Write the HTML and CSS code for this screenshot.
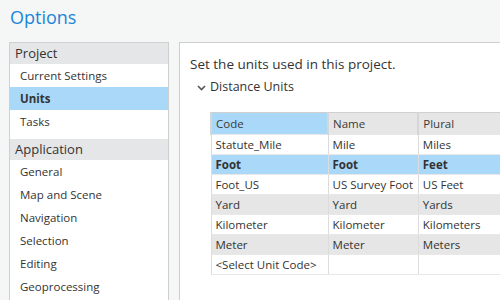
FILE: index.html
```html
<!DOCTYPE html>
<html lang="en">
<head>
    <meta charset="UTF-8">
    <title>Options</title>
    <link rel="stylesheet" href="styles.css">
</head>
<body>
    <div class="window">
        <h1 class="title">Options</h1>

        <div class="layout">
            <!-- Navigation -->
            <div class="nav">
                <div class="nav-group">Project</div>
                <div class="nav-item">Current Settings</div>
                <div class="nav-item selected">Units</div>
                <div class="nav-item">Tasks</div>

                <div class="nav-group spaced">Application</div>
                <div class="nav-item">General</div>
                <div class="nav-item">Map and Scene</div>
                <div class="nav-item">Navigation</div>
                <div class="nav-item">Selection</div>
                <div class="nav-item">Editing</div>
                <div class="nav-item">Geoprocessing</div>
            </div>

            <!-- Contenu -->
            <div class="content">
                <p class="intro">Set the units used in this project.</p>
                <div class="section">
                    <svg class="chevron" width="9" height="6" viewBox="0 0 9 6">
                        <path d="M1 1 L4.5 4.5 L8 1" fill="none" stroke="#555" stroke-width="1.6"/>
                    </svg>
                    <span>Distance Units</span>
                </div>

                <table class="units">
                    <tr class="head">
                        <th class="sorted">Code</th>
                        <th>Name</th>
                        <th>Plural</th>
                    </tr>
                    <tr><td>Statute_Mile</td><td>Mile</td><td>Miles</td></tr>
                    <tr class="current"><td>Foot</td><td>Foot</td><td>Feet</td></tr>
                    <tr><td>Foot_US</td><td>US Survey Foot</td><td>US Feet</td></tr>
                    <tr class="alt"><td>Yard</td><td>Yard</td><td>Yards</td></tr>
                    <tr><td>Kilometer</td><td>Kilometer</td><td>Kilometers</td></tr>
                    <tr class="alt"><td>Meter</td><td>Meter</td><td>Meters</td></tr>
                    <tr><td>&lt;Select Unit Code&gt;</td><td></td><td></td></tr>
                </table>
            </div>
        </div>
    </div>
</body>
</html>
```

FILE: styles.css
```css
/* Base */
body {
    margin: 0;
    background-color: #f5f6f6;
    font-family: 'Open Sans', 'Noto Sans', sans-serif;
    color: #333;
    overflow: hidden;
}

.window {
    padding: 0 0 0 9px;
}

.title {
    margin: 0;
    height: 42px;
    padding-left: 1px;
    font-size: 18px;
    font-weight: 400;
    line-height: 35px;
    color: #1a86d6;
}

.layout {
    display: flex;
    gap: 10px;
}

/* Navigation */
.nav {
    width: 158px;
    height: 270px;
    background-color: #fff;
    border: 1px solid #cfcfcf;
    flex-shrink: 0;
}

.nav-group {
    height: 21px;
    line-height: 21px;
    padding-left: 5px;
    background-color: #e5e6e7;
    font-size: 13px;
    color: #333;
}

.nav-group.spaced {
    margin-top: 6px;
}

.nav-item {
    height: 23px;
    line-height: 23px;
    padding-left: 10px;
    font-size: 11.5px;
    color: #333;
}

.nav-item.selected {
    background-color: #aad8f8;
    font-weight: 700;
}

/* Contenu */
.content {
    flex: 1;
    height: 270px;
    background-color: #fff;
    border: 1px solid #cfcfcf;
    border-right: none;
    padding-left: 10px;
}

.intro {
    margin: 12px 0 0 0;
    font-size: 13.5px;
    line-height: 18px;
    color: #333;
}

.section {
    display: flex;
    align-items: center;
    gap: 4px;
    margin: 6px 0 0 7px;
    font-size: 12.5px;
    line-height: 16px;
}

.chevron {
    margin-top: 1px;
}

/* Table */
.units {
    margin: 17px 0 0 20px;
    border-collapse: collapse;
    border: 1px solid #d0d0d0;
    border-right: none;
    font-size: 11.5px;
}

.units th,
.units td {
    height: 19px;
    padding: 0 4px;
    text-align: left;
    white-space: nowrap;
    border-left: 1px solid #dcdcdc;
    border-bottom: 1px solid #e8e8e8;
}

.units th {
    height: 21px;
    font-weight: 400;
    background-color: #e6e6e6;
    color: #3a3a3a;
    border-left: 2px solid #d6d6d6;
}

.units th:first-child,
.units td:first-child {
    width: 115px;
}

.units th:nth-child(2),
.units td:nth-child(2) {
    width: 81px;
}

.units th:nth-child(3),
.units td:nth-child(3) {
    width: 90px;
}

.units th.sorted {
    background-color: #aad8f8;
}

.units tr.current td {
    background-color: #aad8f8;
    font-weight: 700;
}

.units tr.alt td {
    background-color: #e6e6e6;
}
```
